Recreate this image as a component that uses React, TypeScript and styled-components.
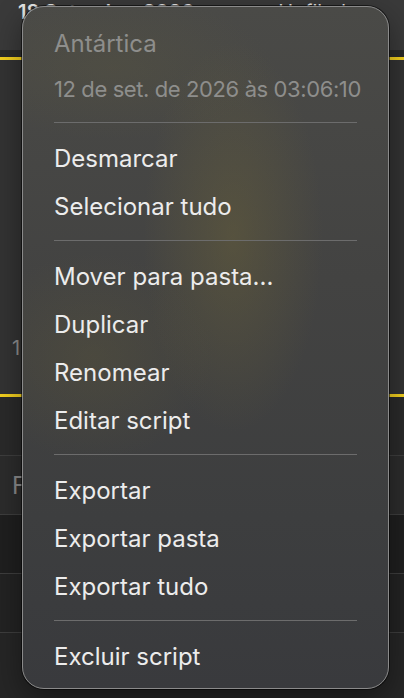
import React from 'react';
import styled, { createGlobalStyle } from 'styled-components';

type MenuEntry = { kind: 'item'; label: string } | { kind: 'sep' };

const entries: MenuEntry[] = [
  { kind: 'item', label: 'Desmarcar' },
  { kind: 'item', label: 'Selecionar tudo' },
  { kind: 'sep' },
  { kind: 'item', label: 'Mover para pasta...' },
  { kind: 'item', label: 'Duplicar' },
  { kind: 'item', label: 'Renomear' },
  { kind: 'item', label: 'Editar script' },
  { kind: 'sep' },
  { kind: 'item', label: 'Exportar' },
  { kind: 'item', label: 'Exportar pasta' },
  { kind: 'item', label: 'Exportar tudo' },
  { kind: 'sep' },
  { kind: 'item', label: 'Excluir script' },
];

const App = () => {
  return (
    <>
      <GlobalStyle />
      <Screen>
        {/* conteúdo atrás do menu */}
        <TopBar>
          <DayTitle>18 Setembro 2026</DayTitle>
          <FolderLabel>Unfiled</FolderLabel>
        </TopBar>
        <Spacer />
        <SelectedCard>
          <CardNumber>1</CardNumber>
        </SelectedCard>
        <ListRow $tone="#2a2a2a" />
        <ListRow $tone="#2c2c2c">
          <RowLetter>F</RowLetter>
        </ListRow>
        <ListRow $tone="#1f1f1f" />
        <ListRow $tone="#232323" />

        <Menu>
          <MenuHeader>Antártica</MenuHeader>
          <MenuHeader $tight>12 de set. de 2026 às 03:06:10</MenuHeader>
          <Separator />
          {entries.map((e, i) =>
            e.kind === 'sep' ? <Separator key={i} /> : <MenuItem key={i}>{e.label}</MenuItem>
          )}
        </Menu>
      </Screen>
    </>
  );
};
export default App;

const GlobalStyle = createGlobalStyle`
  html, body {
    margin: 0;
    padding: 0;
    background: #262626;
  }
  body {
    font-family: Inter, "Noto Sans", sans-serif;
    -webkit-font-smoothing: antialiased;
  }
`;

const Screen = styled.div`
  position: relative;
  width: 404px;
  height: 698px;
  overflow: hidden;
  background: #262626;
  display: flex;
  flex-direction: column;
`;

const TopBar = styled.div`
  height: 50px;
  flex-shrink: 0;
  background: #3a3a3a;
  display: flex;
  align-items: flex-start;
  justify-content: space-between;
  padding: 0 18px;
  box-sizing: border-box;
`;

const DayTitle = styled.span`
  color: #e6e6e6;
  font-size: 20px;
  font-weight: 600;
  line-height: 24px;
`;

const FolderLabel = styled.span`
  color: #e6e6e6;
  font-size: 20px;
  line-height: 24px;
  margin-right: 40px;
`;

const Spacer = styled.div`
  height: 7px;
  flex-shrink: 0;
  background: #2a2a2a;
`;

const SelectedCard = styled.div`
  height: 340px;
  flex-shrink: 0;
  background: #333333;
  border-top: 3px solid #f2cf1f;
  border-bottom: 3px solid #f2cf1f;
  display: flex;
  align-items: flex-end;
  padding: 0 0 34px 12px;
  box-sizing: border-box;
`;

const CardNumber = styled.span`
  color: #8d8d8d;
  font-size: 20px;
`;

const ListRow = styled.div<{ $tone: string }>`
  height: 58px;
  flex-shrink: 0;
  background: ${(p) => p.$tone};
  border-bottom: 1px solid #3e3e3e;
  display: flex;
  align-items: center;
  padding-left: 12px;
`;

const RowLetter = styled.span`
  color: #8a8a8a;
  font-size: 24px;
`;

const Menu = styled.div`
  position: absolute;
  left: 22px;
  top: 6px;
  width: 367px;
  height: 683px;
  box-sizing: border-box;
  padding: 13px 31px 0;
  border-radius: 22px;
  border: 1px solid #8a8a8a;
  box-shadow: 0 0 0 1px rgba(0, 0, 0, 0.55), 0 10px 30px rgba(0, 0, 0, 0.4);
  background:
    radial-gradient(ellipse 120px 260px at 210px 230px, rgba(115, 104, 55, 0.38), transparent 75%),
    radial-gradient(ellipse 150px 130px at 70px 350px, rgba(100, 92, 55, 0.28), transparent 80%),
    radial-gradient(ellipse 200px 90px at 90px 60px, rgba(95, 90, 60, 0.25), transparent 80%),
    linear-gradient(180deg, #4a4a47 0%, #434342 40%, #3d3e3f 75%, #393a3d 100%);
  display: flex;
  flex-direction: column;
`;

const MenuHeader = styled.div<{ $tight?: boolean }>`
  height: 46px;
  display: flex;
  align-items: center;
  white-space: nowrap;
  color: #8e8e8c;
  font-size: ${(p) => (p.$tight ? '22px' : '24px')};
  letter-spacing: ${(p) => (p.$tight ? '-0.4px' : '0')};
`;

const MenuItem = styled.div`
  height: 48px;
  display: flex;
  align-items: center;
  white-space: nowrap;
  color: #ececec;
  font-size: 24px;
`;

const Separator = styled.div`
  height: 1px;
  flex-shrink: 0;
  margin: 10px 0 11px;
  background: #6c6c6c;
`;
